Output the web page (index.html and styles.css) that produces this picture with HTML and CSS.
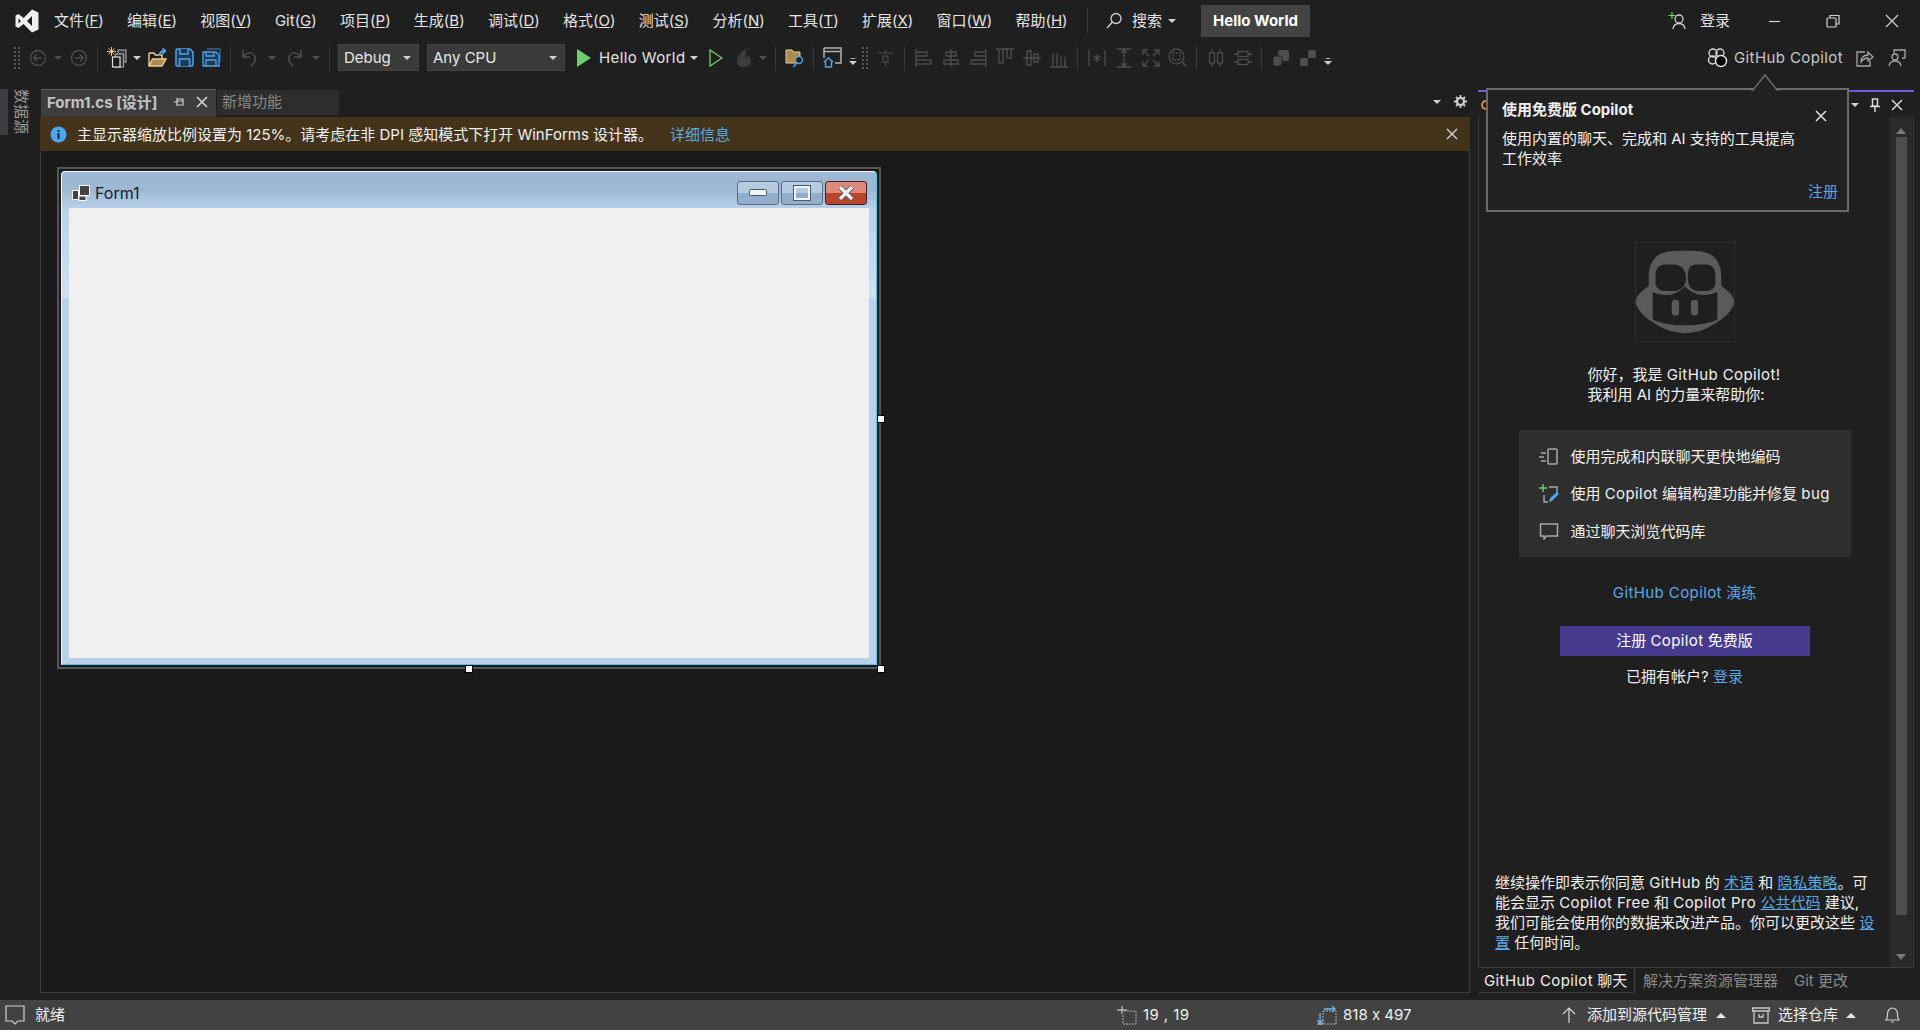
FILE: index.html
```html
<!DOCTYPE html>
<html lang="zh-CN">

<head>
    <meta charset="UTF-8">
    <title>Hello World - Visual Studio</title>
    <link rel="stylesheet" href="styles.css">
</head>

<body>

    <!-- title bar -->
    <div class="titlebar">
        <svg class="vs-logo" width="24" height="24" viewBox="0 0 24 24"><path fill="#f0f0f0" fill-rule="evenodd" d="M17 .5 23.500 3.500V20.500L17 23.500 8.500 15 3.500 19 .5 17.500V6.500L3.500 5 8.500 9ZM3.500 9.500V14.500L6 12ZM17 7 12 12 17 17Z"/></svg>
        <div class="menu">
            <span>文件(<u>F</u>)</span>
            <span>编辑(<u>E</u>)</span>
            <span>视图(<u>V</u>)</span>
            <span>Git(<u>G</u>)</span>
            <span>项目(<u>P</u>)</span>
            <span>生成(<u>B</u>)</span>
            <span>调试(<u>D</u>)</span>
            <span>格式(<u>O</u>)</span>
            <span>测试(<u>S</u>)</span>
            <span>分析(<u>N</u>)</span>
            <span>工具(<u>T</u>)</span>
            <span>扩展(<u>X</u>)</span>
            <span>窗口(<u>W</u>)</span>
            <span>帮助(<u>H</u>)</span>
        </div>
        <div class="title-sep"></div>
        <div class="search">
            <svg width="18" height="18" viewBox="0 0 18 18" fill="none" stroke="#d0d0d0" stroke-width="1.300"><circle cx="11" cy="6.500" r="5"/><path d="M7.500 10 2 16"/></svg>
            <span>搜索</span>
            <i class="arrow"></i>
        </div>
        <div class="solution-name">Hello World</div>
        <div class="title-right">
            <div class="login">
                <svg width="20" height="20" viewBox="0 0 20 20" fill="none"><path d="M4 1v7M.5 4.500h7" stroke="#6fd36f" stroke-width="1.200"/><circle cx="11" cy="8" r="4" stroke="#d0d0d0" stroke-width="1.300"/><path d="M5 18c.5-4 3-5.500 6-5.500s5.500 1.500 6 5.500" stroke="#d0d0d0" stroke-width="1.300"/></svg>
                <span>登录</span>
            </div>
            <div class="win-btns">
                <svg width="16" height="16" viewBox="0 0 16 16"><path d="M3 8.500h11" stroke="#d0d0d0" stroke-width="1.200"/></svg>
                <svg width="16" height="16" viewBox="0 0 16 16" fill="none" stroke="#d0d0d0" stroke-width="1.200"><rect x="2" y="5" width="9" height="9" rx="1"/><path d="M5 5V2.500h9V11h-3"/></svg>
                <svg width="16" height="16" viewBox="0 0 16 16"><path d="M2 2l12 12M14 2 2 14" stroke="#d0d0d0" stroke-width="1.200"/></svg>
            </div>
        </div>
    </div>

    <!-- toolbar -->
    <div class="toolbar">
        <div class="grip"></div>
        <div class="tool"><svg width="18" height="18" viewBox="0 0 18 18" fill="none" stroke="#4e4e4e" stroke-width="1.300"><circle cx="9" cy="9" r="7.500"/><path d="M13 9H5M8 5.500 4.500 9 8 12.500"/></svg></div>
        <div class="drop"><i class="arrow off"></i></div>
        <div class="tool"><svg width="18" height="18" viewBox="0 0 18 18" fill="none" stroke="#4e4e4e" stroke-width="1.300"><circle cx="9" cy="9" r="7.500"/><path d="M5 9h8M10 5.500 13.500 9 10 12.500"/></svg></div>
        <div class="sep"></div>
        <div class="tool"><svg width="20" height="21" viewBox="0 0 20 21" fill="none" stroke="#a0a0a0" stroke-width="1.200"><rect x="11" y="3" width="8" height="12" fill="#3a3a3a"/><rect x="8.500" y="7" width="8" height="13" fill="#2c2c2c"/><rect x="5.500" y="10" width="7.500" height="10" stroke="#e0e0e0" fill="#1f1f1f"/><path d="M4.500 0v9M0 4.500h9M1.500 1.500l6 6M7.500 1.500l-6 6" stroke="#e8c46a" stroke-width="1"/></svg></div>
        <div class="drop"><i class="arrow"></i></div>
        <div class="tool"><svg width="20" height="20" viewBox="0 0 20 20" fill="none"><path d="M1 5h5l1.500 2H14v4" stroke="#eccd8e" stroke-width="1.400"/><path d="M1 5v13h13l4-7H4.500L1 18" fill="#a88a52" stroke="#eccd8e" stroke-width="1.400"/><path d="M11 8c.5-3 2.500-5 5.500-5M14.500.5l3 2.500-3 2.500" stroke="#4da3e8" stroke-width="1.800"/></svg></div>
        <div class="tool"><svg width="19" height="19" viewBox="0 0 19 19" fill="#1d3a55" stroke="#4da3e8" stroke-width="1.500"><path d="M2 1h13l3 3v13l-1 1H2l-1-1V2z"/><path d="M5 1v5h8V1M4.500 18v-7h10v7"/></svg></div>
        <div class="tool"><svg width="19" height="19" viewBox="0 0 19 19" fill="none" stroke="#4da3e8" stroke-width="1.300"><path d="M5 1h13v13" stroke="#33678f"/><path d="M1 4h13l3 3v11H1z" fill="#1d3a55"/><path d="M4 4v4h8V4M4 18v-6h10v6"/></svg></div>
        <div class="sep"></div>
        <div class="tool"><svg width="18" height="18" viewBox="0 0 18 18" fill="none" stroke="#4e4e4e" stroke-width="1.500"><path d="M2 1v7h7M2 8c3-4 7-5 10-3s3 7 0 10l-2 2"/></svg></div>
        <div class="drop wide"><i class="arrow off"></i></div>
        <div class="tool"><svg width="18" height="18" viewBox="0 0 18 18" fill="none" stroke="#4e4e4e" stroke-width="1.500"><path d="M16 1v7H9M16 8c-3-4-7-5-10-3s-3 7 0 10l2 2"/></svg></div>
        <div class="drop wide"><i class="arrow off"></i></div>
        <div class="sep"></div>
        <div class="combo debug"><span>Debug</span><i class="arrow"></i></div>
        <div class="combo cpu"><span>Any CPU</span><i class="arrow"></i></div>
        <div class="tool narrow"><svg width="14" height="18" viewBox="0 0 14 18"><path d="M0 0 14 9 0 18Z" fill="#6fcf6f"/></svg></div>
        <div class="run-name lat">Hello World</div>
        <div class="drop wide"><i class="arrow"></i></div>
        <div class="tool"><svg width="14" height="18" viewBox="0 0 14 18"><path d="M1 1 13 9 1 17Z" fill="none" stroke="#6fcf6f" stroke-width="1.300"/></svg></div>
        <div class="tool flame"><svg width="18" height="20" viewBox="0 0 18 20"><path d="M12 1C6 3 2 8 2 13c0 4 3 6 7 6s7-3 7-6c0-3-2-4-3-6 0 2-1 3-2 3-1-3 0-6 1-9Z" fill="#3c3c3c"/></svg></div>
        <div class="drop"><i class="arrow off"></i></div>
        <div class="sep"></div>
        <div class="tool"><svg width="20" height="20" viewBox="0 0 20 20"><path d="M1 2h6l1.500 2H15v11H1z" fill="#a88a52" stroke="#eccd8e"/><circle cx="14" cy="12" r="3.500" fill="#1f1f1f" stroke="#4da3e8" stroke-width="1.400"/><path d="M11.500 15 8.500 19" stroke="#4da3e8" stroke-width="1.500"/></svg></div>
        <div class="sep"></div>
        <div class="tool"><svg width="20" height="21" viewBox="0 0 20 21" fill="none"><path d="M1 1h17v15h-6M1 1v10M1 4.500h17" stroke="#b0b0b0" stroke-width="1.500"/><path d="M1 15 5.500 11 10 15M2.500 14v6h6v-6" stroke="#4da3e8" stroke-width="1.400"/></svg></div>
        <div class="drop"><i class="overflow"></i></div>
        <div class="grip"></div>
        <div class="tool"><svg width="16" height="16" viewBox="0 0 16 16" fill="none" stroke="#4e4e4e" stroke-width="1.200"><path d="M0 3h15M7.500 0v3M7.500 13v3"/><rect x="5" y="6" width="5" height="6"/></svg></div>
        <div class="sep"></div>
        <div class="tool"><svg width="18" height="18" viewBox="0 0 18 18" fill="none" stroke="#4e4e4e" stroke-width="1.300"><path d="M1 0v18M1 3h11v4H1M1 11h15v4H1"/></svg></div>
        <div class="tool"><svg width="18" height="18" viewBox="0 0 18 18" fill="none" stroke="#4e4e4e" stroke-width="1.300"><path d="M9 0v18M4 3h10v4H4zM2 11h14v4H2z"/></svg></div>
        <div class="tool"><svg width="18" height="18" viewBox="0 0 18 18" fill="none" stroke="#4e4e4e" stroke-width="1.300"><path d="M17 0v18M17 3H6v4h11M17 11H2v4h15"/></svg></div>
        <div class="tool"><svg width="18" height="20" viewBox="0 0 18 20" fill="none" stroke="#4e4e4e" stroke-width="1.300"><path d="M0 1h18M3 1v14h4V1M11 1v9h4V1"/></svg></div>
        <div class="tool"><svg width="18" height="18" viewBox="0 0 18 18" fill="none" stroke="#4e4e4e" stroke-width="1.300"><path d="M0 9h18M4 2h4v14H4zM11 5h4v8h-4z"/></svg></div>
        <div class="tool"><svg width="18" height="20" viewBox="0 0 18 20" fill="none" stroke="#4e4e4e" stroke-width="1.300"><path d="M0 19h18M3 5v14h4V5M11 9v10h4V9"/></svg></div>
        <div class="sep"></div>
        <div class="tool"><svg width="18" height="18" viewBox="0 0 18 18" fill="none" stroke="#4e4e4e" stroke-width="1.300"><path d="M1 1v16M17 1v16M9 5v8M5.500 7l7 4M12.500 7l-7 4"/></svg></div>
        <div class="tool"><svg width="18" height="20" viewBox="0 0 18 20" fill="none" stroke="#4e4e4e" stroke-width="1.300"><path d="M2 1h14M2 19h14M9 2v16M6 5l3-3 3 3M6 15l3 3 3-3"/></svg></div>
        <div class="tool"><svg width="18" height="18" viewBox="0 0 18 18" fill="none" stroke="#4e4e4e" stroke-width="1.300"><path d="M1 6V1h5M12 1h5v5M17 12v5h-5M6 17H1v-5M2 2l5 5M16 2l-5 5M16 16l-5-5M2 16l5-5"/></svg></div>
        <div class="tool"><svg width="19" height="19" viewBox="0 0 19 19" fill="none" stroke="#4e4e4e" stroke-width="1.300"><circle cx="8.500" cy="8.500" r="7.500"/><rect x="5" y="5" width="7" height="7" stroke-dasharray="2 1"/><path d="M14 14l5 5"/></svg></div>
        <div class="sep"></div>
        <div class="tool"><svg width="16" height="18" viewBox="0 0 16 18" fill="none" stroke="#4e4e4e" stroke-width="1.300"><path d="M4 0v18M12 0v18"/><rect x="1.500" y="4" width="5" height="10" fill="#1f1f1f"/><rect x="9.500" y="4" width="5" height="10" fill="#1f1f1f"/></svg></div>
        <div class="tool"><svg width="18" height="16" viewBox="0 0 18 16" fill="none" stroke="#4e4e4e" stroke-width="1.300"><path d="M0 4h18M0 12h18"/><rect x="4" y="1.500" width="10" height="5" fill="#1f1f1f"/><rect x="4" y="9.500" width="10" height="5" fill="#1f1f1f"/></svg></div>
        <div class="sep"></div>
        <div class="tool"><svg width="18" height="18" viewBox="0 0 18 18"><rect x="6" y="1" width="11" height="11" rx="2" fill="#4e4e4e"/><rect x="1" y="7" width="9" height="10" rx="2" fill="#4e4e4e" stroke="#1f1f1f"/></svg></div>
        <div class="tool"><svg width="18" height="18" viewBox="0 0 18 18"><rect x="9" y="1" width="8" height="8" rx="1.500" fill="#4e4e4e"/><rect x="1" y="9" width="8" height="8" rx="1.500" fill="#4e4e4e"/></svg></div>
        <div class="drop"><i class="overflow"></i></div>
        <div class="toolbar-right">
            <svg width="21" height="21" viewBox="0 0 21 21" fill="none" stroke="#d8d8d8" stroke-width="1.400"><circle cx="6" cy="6" r="4"/><circle cx="13" cy="6" r="4"/><circle cx="5.500" cy="13" r="4"/><circle cx="14" cy="14" r="5.500" fill="#000" stroke="#e8e8e8"/></svg>
            <span class="copilot-label lat">GitHub Copilot</span>
            <svg width="18" height="18" viewBox="0 0 18 18" fill="none" stroke="#a8a8a8" stroke-width="1.300"><path d="M9 3H1v14h13v-5"/><path d="M5 13c0-5 3-7 7-7V3l5 5-5 4V9c-3 0-5 1-7 4Z"/></svg>
            <svg class="feedback" width="18" height="18" viewBox="0 0 18 18" fill="none" stroke="#a8a8a8" stroke-width="1.300"><path d="M6 4V1h11v8h-3"/><circle cx="7" cy="8" r="3"/><path d="M1 17c.5-3 3-5 6-5s5.500 2 6 5"/></svg>
        </div>
    </div>

    <div class="main">

        <div class="left-strip">
            <div class="left-marker"></div>
            <div class="left-tab">数据源</div>
        </div>

        <!-- document well -->
        <div class="doc">
            <div class="doc-tabs">
                <div class="doc-tab active">
                    <span>Form1.cs [设计]</span>
                    <svg width="10" height="10" viewBox="0 0 10 10" fill="none" stroke="#d0d0d0" stroke-width="1.200"><path d="M0 5h3M3 1v8M3 2h6v6H3M3 4h6"/></svg>
                    <svg width="12" height="12" viewBox="0 0 12 12"><path d="M1 1l10 10M11 1 1 11" stroke="#d8d8d8" stroke-width="1.500"/></svg>
                </div>
                <div class="doc-tab">新增功能</div>
                <div class="doc-tools">
                    <i class="arrow"></i>
                    <svg width="13" height="13" viewBox="0 0 13 13"><circle cx="6.500" cy="6.500" r="3.500" fill="none" stroke="#d0d0d0" stroke-width="2.200"/><path d="M6.500 0v2.500M6.500 10.500V13M0 6.500h2.500M10.500 6.500H13M2 2l1.500 1.500M9.500 9.500 11 11M11 2 9.500 3.500M3.500 9.500 2 11" stroke="#d0d0d0" stroke-width="1.800"/></svg>
                </div>
            </div>
            <div class="infobar">
                <svg width="17" height="17" viewBox="0 0 17 17"><circle cx="8.500" cy="8.500" r="8" fill="#4aa6f0"/><rect x="7.500" y="7" width="2" height="6" fill="#10243a"/><rect x="7.500" y="4" width="2" height="2" fill="#10243a"/></svg>
                <span class="info-text">主显示器缩放比例设置为 125%。请考虑在非 DPI 感知模式下打开 WinForms 设计器。</span>
                <a class="link info-link">详细信息</a>
                <svg class="info-close" width="12" height="12" viewBox="0 0 12 12"><path d="M1 1l10 10M11 1 1 11" stroke="#d8d8d8" stroke-width="1.300"/></svg>
            </div>
            <div class="designer">
                <div class="selection">
                    <div class="form-window">
                        <div class="form-title">
                            <svg width="18" height="16" viewBox="0 0 18 16"><rect x="7.500" y=".5" width="10" height="10" fill="#444" stroke="#fff"/><rect x=".5" y="5.500" width="6" height="9" fill="#444" stroke="#fff"/><rect x="7" y="11" width="7" height="4.500" fill="#444" stroke="#fff"/></svg>
                            <span class="form-name">Form1</span>
                            <div class="form-btns">
                                <div class="form-btn">
                                    <svg width="18" height="8" viewBox="0 0 18 8"><rect x=".5" y=".5" width="17" height="6" rx="1" fill="#f4f4f4" stroke="#4a5a70"/></svg>
                                </div>
                                <div class="form-btn">
                                    <svg width="18" height="16" viewBox="0 0 18 16"><rect x="1.500" y="1.500" width="15" height="13" fill="none" stroke="#4a5a70" stroke-width="3"/><rect x="2" y="2" width="14" height="12" fill="none" stroke="#f4f4f4" stroke-width="2"/></svg>
                                </div>
                                <div class="form-btn close">
                                    <svg width="18" height="16" viewBox="0 0 18 16"><path d="M3 2l12 12M15 2 3 14" stroke="#4a4058" stroke-width="5"/><path d="M3 2l12 12M15 2 3 14" stroke="#f0f0f0" stroke-width="3.500"/></svg>
                                </div>
                            </div>
                        </div>
                        <div class="form-client"></div>
                    </div>
                    <div class="handle h-right"></div>
                    <div class="handle h-bottom"></div>
                    <div class="handle h-corner"></div>
                </div>
            </div>
        </div>

        <!-- copilot panel -->
        <div class="panel">
            <div class="panel-head">
                <i class="panel-peek"></i>
                <div class="panel-tools">
                    <i class="arrow"></i>
                    <svg width="10" height="14" viewBox="0 0 10 14" fill="none" stroke="#d8d8d8" stroke-width="1.500"><path d="M2.500 1h5v7h-5zM0 8.500h10M5 9v5"/></svg>
                    <svg width="12" height="12" viewBox="0 0 12 12"><path d="M1 1l10 10M11 1 1 11" stroke="#d8d8d8" stroke-width="1.500"/></svg>
                </div>
            </div>
            <div class="panel-body">
                <div class="chat">
                    <svg class="copilot-logo" width="100" height="100" viewBox="0 0 100 100"><path fill="#5a5a5a" fill-rule="evenodd" d="M50 8C58 8 66 8 72 10 82 13 87 22 87 34V44C95 50 100 54 100 60 100 66 95 72 87 78 75 87 62 92 50 92 38 92 25 87 13 78 5 72 0 66 0 60 0 54 5 50 13 44V34C13 22 18 13 28 10 34 8 42 8 50 8ZM30 22C24 22 20 26 20 33V40C20 46 24 49 30 49H38C46 49 51 44 51 36 51 27 46 22 38 22ZM62 22C54 22 53 27 53 36 53 44 56 49 64 49H71C77 49 81 46 81 40V33C81 26 77 22 71 22ZM17 50V78C28 83 40 84 50 84 60 84 72 83 83 78V50C76 53 68 54 62 52 56 50 52 47 50 44 48 47 44 50 38 52 32 54 24 53 17 50Z"/><rect x="36.500" y="58" width="7.500" height="16" rx="3.700" fill="#5a5a5a"/><rect x="56" y="58" width="7.500" height="16" rx="3.700" fill="#5a5a5a"/></svg>
                    <p class="hello">你好，我是 <span class="lat">GitHub Copilot!</span><br>我利用 AI 的力量来帮助你:</p>
                    <div class="features">
                        <div class="feature">
                            <svg width="20" height="18" viewBox="0 0 20 18" fill="none" stroke="#a8a8a8" stroke-width="1.500"><rect x="9" y="1" width="9" height="15" rx="1"/><path d="M2 5h5M0 9h5M2 13h5"/></svg>
                            <span>使用完成和内联聊天更快地编码</span>
                        </div>
                        <div class="feature">
                            <svg width="20" height="20" viewBox="0 0 20 20" fill="none"><path d="M4 0v8M0 4h8" stroke="#6fd36f" stroke-width="1.400"/><path d="M10 3h8v6M5 11v7h4" stroke="#a8a8a8" stroke-width="1.400"/><path d="M10 18l1-4 7-6 2 2-7 7Z" fill="#4da3e8"/></svg>
                            <span>使用 <span class="lat">Copilot</span> 编辑构建功能并修复 <span class="lat">bug</span></span>
                        </div>
                        <div class="feature">
                            <svg width="19" height="17" viewBox="0 0 19 17" fill="none" stroke="#a8a8a8" stroke-width="1.500"><path d="M1 1h17v12H7l-2.500 3V13H1z"/></svg>
                            <span>通过聊天浏览代码库</span>
                        </div>
                    </div>
                    <a class="link walkthrough"><span class="lat">GitHub Copilot</span> 演练</a>
                    <div class="signup-btn">注册 <span class="lat">Copilot</span> 免费版</div>
                    <p class="have-account">已拥有帐户? <a class="link">登录</a></p>
                    <p class="legal">继续操作即表示你同意 <span class="lat">GitHub</span> 的 <a class="link ul">术语</a> 和 <a class="link ul">隐私策略</a>。可<br>能会显示 <span class="lat">Copilot Free</span> 和 <span class="lat">Copilot Pro</span> <a class="link ul">公共代码</a> 建议,<br>我们可能会使用你的数据来改进产品。你可以更改这些 <a class="link ul">设</a><br><a class="link ul">置</a> 任何时间。</p>
                </div>
                <div class="scrollbar">
                    <i class="sb-up"></i>
                    <div class="sb-thumb"></div>
                    <i class="sb-down"></i>
                </div>
            </div>
            <div class="panel-tabs">
                <div class="panel-tab active"><span class="lat">GitHub Copilot</span> 聊天</div>
                <div class="panel-tab">解决方案资源管理器</div>
                <div class="panel-tab">Git 更改</div>
            </div>
        </div>

        <!-- copilot callout -->
        <div class="callout">
            <svg class="callout-tip" width="28" height="17" viewBox="0 0 28 17"><path d="M0 16h2L14 1l12 15h2" fill="#212121" stroke="#6a6a6a" stroke-width="1.500"/></svg>
            <svg class="callout-close" width="12" height="12" viewBox="0 0 12 12"><path d="M1 1l10 10M11 1 1 11" stroke="#e0e0e0" stroke-width="1.500"/></svg>
            <div class="callout-title">使用免费版 Copilot</div>
            <div class="callout-text">使用内置的聊天、完成和 AI 支持的工具提高<br>工作效率</div>
            <a class="link callout-link">注册</a>
        </div>
    </div>

    <!-- status bar -->
    <div class="statusbar">
        <svg width="20" height="20" viewBox="0 0 20 20" fill="none" stroke="#d0d0d0" stroke-width="1.200"><path d="M1 1h18v15h-6l-3 3-3-3H1z"/></svg>
        <span class="ready">就绪</span>
        <div class="status-right">
            <div class="st-item st-pos">
                <svg width="20" height="19" viewBox="0 0 20 19" fill="none" stroke="#b0b0b0"><path d="M5 0v8M0 4h10" stroke="#e0e0e0"/><path d="M7 5h12v13H6V9" stroke-dasharray="2 1"/></svg>
                <span class="lat">19 , 19</span>
            </div>
            <div class="st-item st-size">
                <svg width="20" height="19" viewBox="0 0 20 19" fill="none"><rect x="6" y="5" width="13" height="13" stroke="#b0b0b0" stroke-dasharray="2 1"/><path d="M7 3h11M15 0l3 3-3 3M3 7v10M0 14l3 3 3-3" stroke="#6cb8f0" stroke-width="1.300"/><path d="M0 18h6" stroke="#e0e0e0"/></svg>
                <span>818 x 497</span>
            </div>
            <div class="st-item st-src">
                <svg width="14" height="16" viewBox="0 0 14 16" fill="none" stroke="#d8d8d8" stroke-width="1.200"><path d="M7 16V1M1 7l6-6 6 6"/></svg>
                <span>添加到源代码管理</span>
                <i class="arrow up"></i>
            </div>
            <div class="st-item st-repo">
                <svg width="18" height="17" viewBox="0 0 18 17" fill="none" stroke="#c8c8c8" stroke-width="1.300"><path d="M.5 1h17v3H.5zM2 4v12h14V4M7 7v3h4V7"/></svg>
                <span>选择仓库</span>
                <i class="arrow up"></i>
            </div>
            <svg class="bell" width="15" height="18" viewBox="0 0 15 18" fill="none" stroke="#d0d0d0" stroke-width="1.200"><path d="M1 14c1.500-1.500 1.500-3 1.500-6s2-6 5-6 5 3 5 6 0 4.500 1.500 6zM6 16h3"/></svg>
        </div>
    </div>

</body>

</html>
```

FILE: styles.css
```css
* {
    box-sizing: border-box;
}

body {
    margin: 0;
    width: 1920px;
    height: 1030px;
    overflow: hidden;
    display: flex;
    flex-direction: column;
    background-color: #1f1f1f;
    color: #f1f1f1;
    font-family: "Inter", "Noto Sans CJK SC", sans-serif;
    font-feature-settings: "calt" 0;
    font-size: 15px;
    line-height: 20px;
}

svg {
    display: block;
    flex-shrink: 0;
}

p {
    margin: 0;
}

/* latin words run a bit wider than Inter */
.lat {
    letter-spacing: .4px;
}

.link {
    color: #5ba8e6;
}

.link.ul {
    text-decoration: underline;
}

.arrow {
    display: block;
    width: 0;
    height: 0;
    border-left: 4px solid transparent;
    border-right: 4px solid transparent;
    border-top: 4px solid #d0d0d0;
}

.arrow.off {
    border-top-color: #4e4e4e;
}

.arrow.up {
    border-top: none;
    border-bottom: 5px solid #e8e8e8;
    border-left-width: 5px;
    border-right-width: 5px;
}

/* title bar */
.titlebar {
    height: 42px;
    flex-shrink: 0;
    display: flex;
    align-items: center;
    padding-left: 15px;
}

.menu {
    width: 1033px;
    margin-left: 15px;
    display: flex;
    gap: 23.250px;
    color: #e4e4e4;
}

.title-sep {
    width: 1px;
    height: 26px;
    background-color: #3a3a3a;
}

.search {
    display: flex;
    align-items: center;
    margin-left: 17px;
    color: #e4e4e4;
}

.search span {
    margin: 0 6px 0 9px;
}

.solution-name {
    width: 109px;
    height: 32px;
    margin-left: 25px;
    background-color: #434343;
    font-weight: 700;
    text-align: center;
    line-height: 31px;
    color: #fff;
}

.title-right {
    margin-left: auto;
    display: flex;
    align-items: center;
    padding-right: 20px;
}

.login {
    display: flex;
    align-items: center;
    gap: 12px;
    color: #e4e4e4;
}

.win-btns {
    display: flex;
    gap: 43px;
    margin-left: 36px;
}

/* toolbar */
.toolbar {
    height: 46px;
    flex-shrink: 0;
    display: flex;
    align-items: center;
    gap: 2px;
    padding: 0 14px 15px 13px;
}

.grip {
    width: 8px;
    height: 24px;
    margin-right: 2px;
    background-image: radial-gradient(#555 1px, transparent 1px);
    background-size: 4px 4px;
}

.tool {
    width: 25px;
    display: flex;
    justify-content: center;
}

.tool.narrow {
    width: 21px;
}

.tool.flame svg {
    margin-left: 3px;
}

.drop {
    width: 12px;
    display: flex;
    justify-content: center;
}

.drop.wide {
    width: 15px;
}

.overflow {
    display: block;
    width: 8px;
    height: 6px;
    margin-top: 7px;
    border-top: 1px solid #d0d0d0;
    border-left: 4px solid transparent;
    border-right: 4px solid transparent;
    border-bottom: 0;
    position: relative;
}

.overflow::after {
    content: "";
    position: absolute;
    left: -4px;
    top: 2px;
    border-left: 4px solid transparent;
    border-right: 4px solid transparent;
    border-top: 4px solid #d0d0d0;
}

.sep {
    width: 1px;
    height: 24px;
    margin: 0 4px;
    background-color: #3a3a3a;
}

.combo {
    height: 27px;
    display: flex;
    align-items: center;
    justify-content: space-between;
    background-color: #3a3a3a;
    border: 1px solid #434343;
    color: #e8e8e8;
}

.combo.debug {
    width: 81px;
    margin-left: 2px;
    margin-right: 6px;
    padding: 0 7px 0 5px;
}

.combo.cpu {
    width: 138px;
    margin-right: 6px;
    padding: 0 7px 0 5px;
}

.run-name {
    width: 85px;
    margin-left: 3px;
    color: #e4e4e4;
    white-space: nowrap;
}

.toolbar-right {
    margin-left: auto;
    display: flex;
    align-items: center;
}

.copilot-label {
    width: 110px;
    margin: 0 12px 0 6px;
    color: #c8c8c8;
    white-space: nowrap;
}

.feedback {
    margin-left: 14px;
}

/* main area */
.main {
    position: relative;
    flex: 1;
    min-height: 0;
    display: flex;
}

.left-strip {
    width: 40px;
    display: flex;
}

.left-marker {
    width: 8px;
    height: 46px;
    margin-top: 1px;
    background-color: #3d3d3d;
}

.left-tab {
    margin: 1px 0 0 5px;
    writing-mode: vertical-rl;
    text-orientation: sideways;
    color: #9a9a9a;
    line-height: 16px;
    height: 46px;
}

/* document well */
.doc {
    width: 1430px;
    margin-bottom: 7px;
    display: flex;
    flex-direction: column;
}

.doc-tabs {
    height: 29px;
    flex-shrink: 0;
    display: flex;
    align-items: flex-end;
    padding-bottom: 2px;
    padding-left: 1px;
}

.doc-tab {
    width: 122px;
    height: 25px;
    padding-left: 5px;
    margin-left: 1px;
    background-color: #2d2d2d;
    color: #8a8a8a;
    line-height: 23px;
}

.doc-tab.active {
    width: 175px;
    height: 28px;
    margin-left: 0;
    margin-bottom: -2px;
    padding: 0 0 3px 6px;
    display: flex;
    align-items: center;
    background-color: #3d3d3d;
    border-top: 1px solid #5a5a5a;
    color: #c4c4c4;
    font-weight: 700;
}

.doc-tab.active span {
    width: 127px;
    white-space: nowrap;
}

.doc-tab.active svg:last-child {
    margin-left: 12px;
}

.doc-tools {
    margin-left: auto;
    align-self: center;
    display: flex;
    align-items: center;
    gap: 13px;
    padding-right: 3px;
}

.infobar {
    height: 34px;
    flex-shrink: 0;
    display: flex;
    align-items: center;
    padding-left: 10px;
    background-color: #43331b;
    color: #f0f0f0;
}

.info-text {
    width: 593px;
    margin-left: 10px;
    margin-top: 2px;
    white-space: nowrap;
}

.info-link {
    margin-top: 2px;
}

.info-close {
    margin-left: auto;
    margin-right: 12px;
}

.designer {
    flex: 1;
    min-height: 0;
    padding: 16px 0 0 16px;
    background-color: #1a1a1a;
    border-left: 1px solid #3c3c3c;
    border-right: 1px solid #3c3c3c;
    border-bottom: 1px solid #3c3c3c;
}

.selection {
    position: relative;
    width: 824px;
    height: 502px;
    padding: 2px;
    border: 2px solid #555;
}

.form-window {
    width: 816px;
    height: 494px;
    display: flex;
    flex-direction: column;
    padding: 0 7px 6px 7px;
    background: linear-gradient(#9eb8d3 0, #9eb8d3 18px, #b9d2ea 37px, #cfe0f2 126px, #b9d2ea 127px);
    border-top: 1px solid #f4f8fb;
    border-left: 1px solid #f4f8fb;
    border-right: 1px solid #49c6e8;
    border-bottom: 1px solid #49c6e8;
    border-radius: 4px 4px 0 0;
}

.form-title {
    height: 36px;
    flex-shrink: 0;
    display: flex;
    align-items: center;
    padding: 6px 2px 0 3px;
}

.form-name {
    margin-left: 5px;
    color: #101c30;
    font-size: 16px;
}

.form-btns {
    margin-left: auto;
    display: flex;
    gap: 2px;
}

.form-btn {
    width: 42px;
    height: 24px;
    display: flex;
    align-items: center;
    justify-content: center;
    border: 1px solid #5a6c88;
    border-radius: 3px;
    background: linear-gradient(#b4cbe2 50%, #93aecc 50%);
}

.form-btn.close {
    border-color: #4a2030;
    background: linear-gradient(#dc8a7a 0, #dc8a7a 50%, #b8452c 50%);
}

.form-client {
    flex: 1;
    background-color: #f0f0f0;
}

.handle {
    position: absolute;
    width: 8px;
    height: 8px;
    background-color: #fff;
    border: 1px solid #000;
}

.h-right {
    right: -6px;
    top: 246px;
}

.h-bottom {
    left: 406px;
    bottom: -6px;
}

.h-corner {
    right: -6px;
    bottom: -6px;
}

/* copilot panel */
.panel {
    width: 436px;
    margin: 2px 0 7px 8px;
    display: flex;
    flex-direction: column;
}

.panel-head {
    height: 27px;
    flex-shrink: 0;
    display: flex;
    align-items: center;
    border-top: 2px solid #6e5fd8;
}

.panel-peek {
    display: block;
    width: 8px;
    height: 10px;
    margin-left: 3px;
    border-radius: 5px 0 0 5px;
    border: 2px solid #d08a3a;
    border-right: none;
}

.panel-tools {
    margin-left: auto;
    display: flex;
    align-items: center;
    gap: 11px;
    padding-right: 11px;
}

.panel-body {
    flex: 1;
    min-height: 0;
    display: flex;
    border-left: 1px solid #3c3c3c;
    border-right: 1px solid #3c3c3c;
    border-bottom: 1px solid #3c3c3c;
}

.chat {
    width: 411px;
    display: flex;
    flex-direction: column;
    align-items: center;
    padding-top: 125px;
    padding-bottom: 14px;
}

.copilot-logo {
    border: 1px dotted #3c3c3c;
}

.hello {
    margin-top: 23px;
    margin-bottom: 1px;
    width: 194px;
    white-space: nowrap;
}

.features {
    width: 332px;
    height: 127px;
    margin-top: 24px;
    padding: 8px 0 0 20px;
    background-color: #2e2e2e;
}

.feature {
    height: 37.500px;
    display: flex;
    align-items: center;
    gap: 12px;
}

.feature svg {
    width: 20px;
}

.walkthrough {
    margin-top: 26px;
}

.signup-btn {
    width: 250px;
    height: 30px;
    margin-top: 23px;
    background-color: #463a8e;
    color: #fff;
    text-align: center;
    line-height: 30px;
}

.have-account {
    margin-top: 11px;
}

.legal {
    margin-top: auto;
    align-self: flex-start;
    margin-left: 16px;
    white-space: nowrap;
}

.scrollbar {
    width: 22px;
    display: flex;
    flex-direction: column;
    align-items: center;
    background-color: #2a2a2a;
    padding: 11px 0 7px 0;
}

.sb-up,
.sb-down {
    display: block;
    width: 0;
    height: 0;
    border-left: 5px solid transparent;
    border-right: 5px solid transparent;
}

.sb-up {
    border-bottom: 6px solid #7a7a7a;
}

.sb-down {
    margin-top: auto;
    border-top: 6px solid #7a7a7a;
}

.sb-thumb {
    width: 11px;
    height: 778px;
    margin-top: 3px;
    background-color: #4d4d4d;
}

.panel-tabs {
    height: 25px;
    flex-shrink: 0;
    display: flex;
}

.panel-tab {
    padding-left: 8px;
    padding-right: 6px;
    color: #8a8a8a;
    line-height: 26px;
    white-space: nowrap;
}

.panel-tab.active {
    width: 157px;
    padding-left: 6px;
    color: #f0f0f0;
    border-right: 1px solid #3c3c3c;
    border-bottom: 1px solid #3c3c3c;
}

.panel-tab:last-child {
    margin-left: 2px;
}

/* callout */
.callout {
    position: absolute;
    left: 1486px;
    top: 0;
    width: 363px;
    height: 124px;
    padding: 10px 14px;
    background-color: #212121;
    border: 2px solid #6a6a6a;
}

.callout-tip {
    position: absolute;
    left: 263px;
    top: -16px;
}

.callout-close {
    position: absolute;
    right: 20px;
    top: 20px;
}

.callout-title {
    font-weight: 700;
    white-space: nowrap;
}

.callout-text {
    margin-top: 9px;
    white-space: nowrap;
}

.callout-link {
    position: absolute;
    right: 9px;
    bottom: 8px;
}

/* status bar */
.statusbar {
    height: 30px;
    flex-shrink: 0;
    display: flex;
    align-items: center;
    padding-left: 5px;
    background-color: #424242;
    color: #f0f0f0;
}

.ready {
    margin-left: 10px;
}

.status-right {
    margin-left: auto;
    display: flex;
    align-items: center;
    padding-right: 20px;
}

.st-item {
    display: flex;
    align-items: center;
    white-space: nowrap;
}

.st-pos {
    width: 200px;
    gap: 6px;
}

.st-size {
    width: 245px;
    gap: 6px;
}

.st-src {
    width: 190px;
}

.st-src span {
    margin: 0 9px 0 11px;
}

.st-repo {
    width: 133px;
}

.st-repo span {
    margin: 0 8px;
}
```
